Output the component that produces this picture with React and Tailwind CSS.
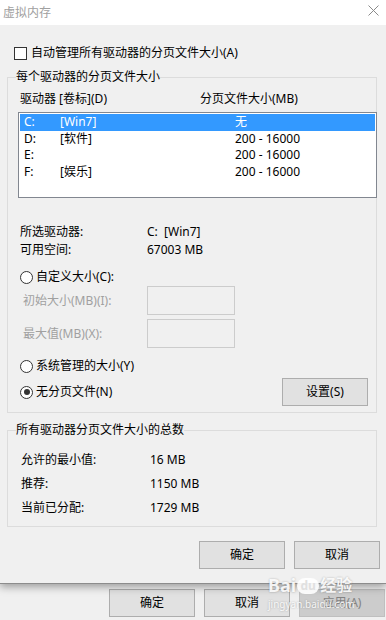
import React from 'react';

const drives = [
  { letter: 'C:', label: '[Win7]', size: '无', selected: true },
  { letter: 'D:', label: '[软件]', size: '200 - 16000' },
  { letter: 'E:', label: '', size: '200 - 16000' },
  { letter: 'F:', label: '[娱乐]', size: '200 - 16000' },
];

function Radio({ checked }) {
  return (
    <span className="w-[13px] h-[13px] rounded-full border border-[#333] bg-white flex items-center justify-center shrink-0">
      {checked && <span className="w-[6px] h-[6px] rounded-full bg-[#333]" />}
    </span>
  );
}

function Button({ children, disabled = false, className = '' }) {
  return (
    <div
      className={`w-[86px] h-[28px] flex items-center justify-center border ${
        disabled
          ? 'bg-[#cccccc] border-[#bfbfbf] text-[#838383]'
          : 'bg-[#e1e1e1] border-[#adadad] text-black'
      } ${className}`}
    >
      {children}
    </div>
  );
}

export default function App() {
  return (
    <div
      className="w-[386px] h-[620px] overflow-hidden bg-[#f0f0f0] text-[12px] leading-[16px] text-black"
      style={{ fontFamily: "'Noto Sans', 'Noto Sans CJK SC', sans-serif" }}
    >
      {/* Dialog */}
      <div className="relative z-10 h-[584px] bg-[#f0f0f0] border-b border-[#8c8c8c] shadow-[0_3px_8px_rgba(0,0,0,0.35)]">
        {/* Title bar */}
        <div className="h-[25px] bg-white flex items-center justify-between pl-[3px] pr-[7px]">
          <span className="text-[#a0a0a0]">虚拟内存</span>
          <svg width="11" height="11" viewBox="0 0 11 11" className="-mt-[4px]">
            <path d="M0.5 0.5L10.5 10.5M10.5 0.5L0.5 10.5" stroke="#8a8a8a" strokeWidth="1" />
          </svg>
        </div>

        {/* Auto manage checkbox */}
        <div className="mt-[20px] h-[16px] pl-[14px] flex items-center gap-[4px]">
          <span className="w-[13px] h-[13px] border border-[#333] bg-white shrink-0" />
          <span>自动管理所有驱动器的分页文件大小(A)</span>
        </div>

        {/* Per-drive group */}
        <fieldset className="mt-[8px] ml-[7px] w-[370px] min-w-0 border border-[#dcdcdc] pl-[12px] pb-[6px]">
          <legend className="-ml-[4px]">每个驱动器的分页文件大小</legend>

          <div className="mt-[6px] h-[16px] flex">
            <span className="w-[180px]">驱动器 [卷标](D)</span>
            <span>分页文件大小(MB)</span>
          </div>

          <div className="mt-[5px] -ml-[2px] w-[359px] h-[86px] border border-[#828790] bg-white p-[1px]">
            {drives.map((d) => (
              <div
                key={d.letter}
                className={`flex h-[16.6px] items-center ${
                  d.selected ? 'bg-[#3399ff] text-white' : ''
                }`}
              >
                <span className="pl-[4px] w-[40px]">{d.letter}</span>
                <span className="w-[175px]">{d.label}</span>
                <span>{d.size}</span>
              </div>
            ))}
          </div>

          <div className="mt-[25px] h-[18px] flex items-center">
            <span className="w-[127px]">所选驱动器:</span>
            <span>C:&nbsp;&nbsp;[Win7]</span>
          </div>
          <div className="h-[18px] flex items-center">
            <span className="w-[127px]">可用空间:</span>
            <span>67003 MB</span>
          </div>

          <div className="mt-[10px] h-[16px] flex items-center gap-[3px]">
            <Radio />
            <span>自定义大小(C):</span>
          </div>

          <div className="mt-[1px] h-[29px] flex items-center">
            <span className="pl-[3px] w-[127px] text-[#a0a0a0]">初始大小(MB)(I):</span>
            <span className="w-[88px] h-[29px] border border-[#cccccc] bg-[#f0f0f0]" />
          </div>
          <div className="mt-[4px] h-[29px] flex items-center">
            <span className="pl-[3px] w-[127px] text-[#a0a0a0]">最大值(MB)(X):</span>
            <span className="w-[88px] h-[29px] border border-[#cccccc] bg-[#f0f0f0]" />
          </div>

          <div className="mt-[10px] h-[16px] flex items-center gap-[3px]">
            <Radio />
            <span>系统管理的大小(Y)</span>
          </div>

          <div className="mt-[4px] mr-[8px] h-[28px] flex items-center justify-between">
            <div className="flex items-center gap-[3px]">
              <Radio checked />
              <span>无分页文件(N)</span>
            </div>
            <Button>设置(S)</Button>
          </div>
        </fieldset>

        {/* Totals group */}
        <fieldset className="mt-[9px] ml-[7px] w-[370px] min-w-0 border border-[#dcdcdc] pl-[13px] pb-[6px]">
          <legend className="-ml-[5px]">所有驱动器分页文件大小的总数</legend>
          <div className="mt-[10px]">
            {[
              ['允许的最小值:', '16 MB'],
              ['推荐:', '1150 MB'],
              ['当前已分配:', '1729 MB'],
            ].map(([k, v]) => (
              <div key={k} className="h-[24px] flex items-center">
                <span className="w-[129px]">{k}</span>
                <span>{v}</span>
              </div>
            ))}
          </div>
        </fieldset>

        <div className="mt-[14px] pr-[6px] flex justify-end gap-[9px]">
          <Button>确定</Button>
          <Button>取消</Button>
        </div>
      </div>

      {/* Window behind */}
      <div className="relative mt-[5px] pr-[1px] flex justify-end gap-[9px]">
        <Button>确定</Button>
        <Button>取消</Button>
        <Button disabled>应用(A)</Button>

        {/* Baidu watermark */}
        <div className="absolute left-[268px] -top-[13px] z-20 flex flex-col items-start text-white/90 pointer-events-none [text-shadow:0_0_2px_rgba(0,0,0,0.3)]">
          <div className="flex items-end h-[18px]">
            <span className="text-[18px] leading-[18px] font-bold">Bai</span>
            <span className="relative mx-[1px] w-[22px] h-[16px] rounded-full bg-white/90 text-[#e0e0e0] text-[12px] leading-[16px] font-bold flex items-center justify-center [text-shadow:none]">
              du
            </span>
            <span className="text-[16px] leading-[18px] font-bold">经验</span>
          </div>
          <span className="mt-[4px] text-[10px] leading-[12px]">jingyan.baidu.com</span>
        </div>
      </div>
    </div>
  );
}
